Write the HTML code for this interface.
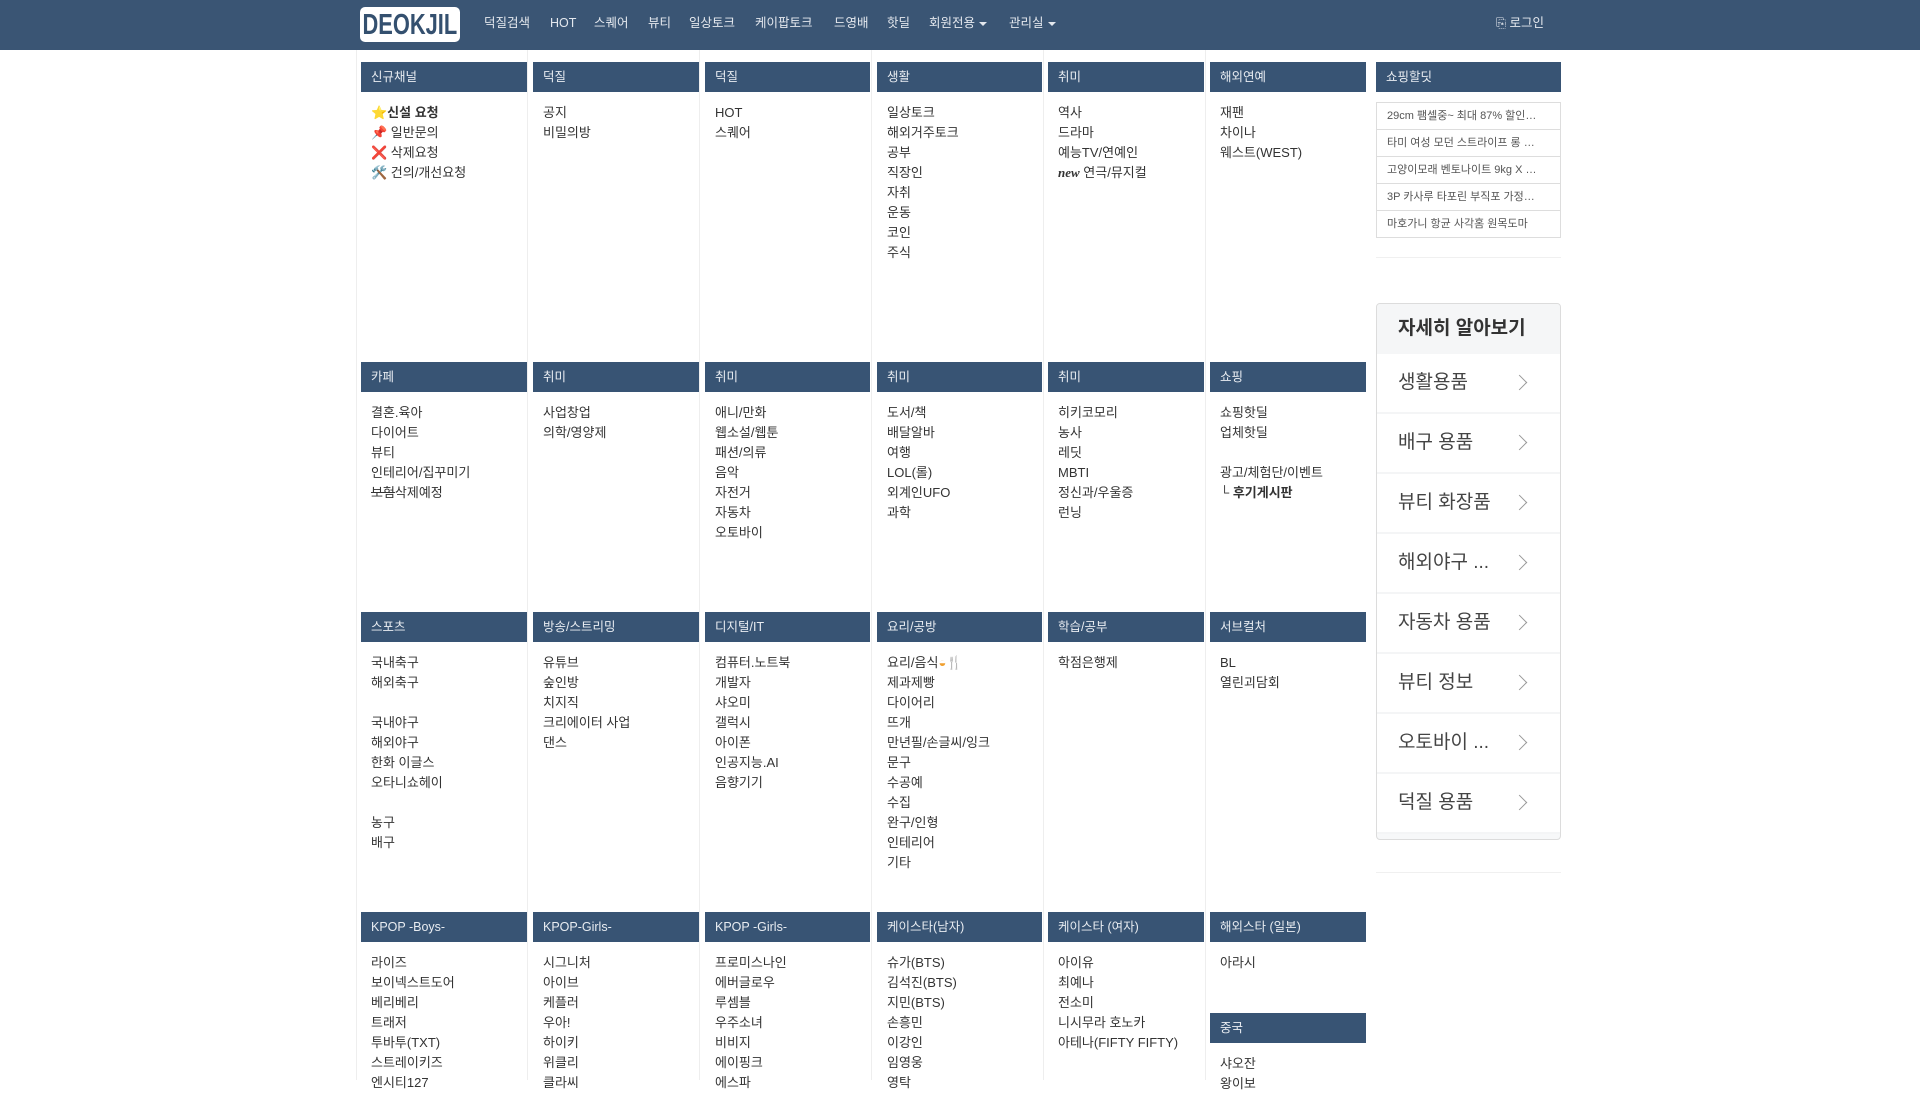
<!DOCTYPE html>
<html><head><meta charset="utf-8">
<style>
*{margin:0;padding:0;box-sizing:border-box}
body{width:1920px;height:1080px;overflow:hidden;background:#fff;font-family:"Liberation Sans","Noto Sans CJK KR",sans-serif;font-size:13px;color:#333;position:relative}
.nav{position:absolute;left:0;top:0;width:1920px;height:50px;background:#3a5574}
.nav span{position:absolute;top:13px;line-height:20px;height:20px;color:#e4e8ee;font-size:12.5px;white-space:nowrap}
.logo{position:absolute;left:360px;top:7px;width:100px;height:35px;background:#fff;border-radius:5px;color:#34506f;font-weight:900;font-size:23px;text-align:center;line-height:35px;letter-spacing:0px;font-family:"Liberation Sans",sans-serif}
.logo b{display:inline-block;transform:scale(0.95,1.25)}
.car{display:inline-block;border-left:4px solid transparent;border-right:4px solid transparent;border-top:4px solid #e4e8ee;vertical-align:middle;margin-left:4px}
.vl{position:absolute;top:50px;width:1px;height:1030px;background:#eeeeee}
.blk{position:absolute}
.h{height:30px;background:#385474;color:#e8ecf1;line-height:30px;padding-left:10px;font-size:12.5px;white-space:nowrap}
.it{padding:11px 0 0 10px;line-height:20px;white-space:nowrap}
.it div{height:20px}
.sh{position:absolute;left:1376px;width:185px}
.sl{height:27px;border:1px solid #ddd;border-top:none;font-size:11px;color:#555;line-height:26px;padding-left:10px;white-space:nowrap;overflow:hidden}
.box{position:absolute;left:1376px;top:303px;width:185px;height:537px;border:1px solid #dcdcdc;border-radius:4px;overflow:hidden;background:#f7f8f9}
.box .t{height:50px;background:#f5f6f7;font-size:19px;font-weight:bold;color:#333;line-height:50px;padding-left:21px}
.box .r{height:60px;background:#fff;border-bottom:2px solid #f4f5f6;font-size:19px;color:#444;line-height:58px;padding-left:21px;position:relative}
.box .r:after{content:"";position:absolute;left:137px;top:23px;width:10px;height:10px;border-right:1.5px solid #999;border-top:1.5px solid #999;transform:rotate(45deg)}
</style></head><body>
<div class="nav">
<div class="logo"><b>DEOKJIL</b></div>
<span style="left:484px">덕질검색</span>
<span style="left:550px">HOT</span>
<span style="left:594px">스퀘어</span>
<span style="left:648px">뷰티</span>
<span style="left:689px">일상토크</span>
<span style="left:755px">케이팝토크</span>
<span style="left:834px">드영배</span>
<span style="left:887px">핫딜</span>
<span style="left:929px">회원전용<i class="car"></i></span>
<span style="left:1009px">관리실<i class="car"></i></span>
<span style="left:1496px">&#x2398;&nbsp;로그인</span>
</div>

<div class="vl" style="left:356px"></div>
<div class="vl" style="left:527px"></div>
<div class="vl" style="left:699px"></div>
<div class="vl" style="left:871px"></div>
<div class="vl" style="left:1043px"></div>
<div class="vl" style="left:1205px"></div>

<div class="blk" style="left:361px;top:62px;width:166px"><div class="h">신규채널</div><div class="it"><div><b>⭐신설 요청</b></div><div>📌 일반문의</div><div><span style="color:#e33">❌</span> 삭제요청</div><div>🛠️ 건의/개선요청</div></div></div>
<div class="blk" style="left:533px;top:62px;width:166px"><div class="h">덕질</div><div class="it"><div>공지</div><div>비밀의방</div></div></div>
<div class="blk" style="left:705px;top:62px;width:165px"><div class="h">덕질</div><div class="it"><div>HOT</div><div>스퀘어</div></div></div>
<div class="blk" style="left:877px;top:62px;width:165px"><div class="h">생활</div><div class="it"><div>일상토크</div><div>해외거주토크</div><div>공부</div><div>직장인</div><div>자취</div><div>운동</div><div>코인</div><div>주식</div></div></div>
<div class="blk" style="left:1048px;top:62px;width:156px"><div class="h">취미</div><div class="it"><div>역사</div><div>드라마</div><div>예능TV/연예인</div><div><b><i style="font-family:'Liberation Serif',serif">new</i></b> 연극/뮤지컬</div></div></div>
<div class="blk" style="left:1210px;top:62px;width:156px"><div class="h">해외연예</div><div class="it"><div>재팬</div><div>차이나</div><div>웨스트(WEST)</div></div></div>

<div class="blk" style="left:361px;top:362px;width:166px"><div class="h">카페</div><div class="it"><div>결혼.육아</div><div>다이어트</div><div>뷰티</div><div>인테리어/집꾸미기</div><div><s>보험</s>삭제예정</div></div></div>
<div class="blk" style="left:533px;top:362px;width:166px"><div class="h">취미</div><div class="it"><div>사업창업</div><div>의학/영양제</div></div></div>
<div class="blk" style="left:705px;top:362px;width:165px"><div class="h">취미</div><div class="it"><div>애니/만화</div><div>웹소설/웹툰</div><div>패션/의류</div><div>음악</div><div>자전거</div><div>자동차</div><div>오토바이</div></div></div>
<div class="blk" style="left:877px;top:362px;width:165px"><div class="h">취미</div><div class="it"><div>도서/책</div><div>배달알바</div><div>여행</div><div>LOL(롤)</div><div>외계인UFO</div><div>과학</div></div></div>
<div class="blk" style="left:1048px;top:362px;width:156px"><div class="h">취미</div><div class="it"><div>히키코모리</div><div>농사</div><div>레딧</div><div>MBTI</div><div>정신과/우울증</div><div>런닝</div></div></div>
<div class="blk" style="left:1210px;top:362px;width:156px"><div class="h">쇼핑</div><div class="it"><div>쇼핑핫딜</div><div>업체핫딜</div><div></div><div>광고/체험단/이벤트</div><div><b>└ 후기게시판</b></div></div></div>

<div class="blk" style="left:361px;top:612px;width:166px"><div class="h">스포츠</div><div class="it"><div>국내축구</div><div>해외축구</div><div></div><div>국내야구</div><div>해외야구</div><div>한화 이글스</div><div>오타니쇼헤이</div><div></div><div>농구</div><div>배구</div></div></div>
<div class="blk" style="left:533px;top:612px;width:166px"><div class="h">방송/스트리밍</div><div class="it"><div>유튜브</div><div>숲인방</div><div>치지직</div><div>크리에이터 사업</div><div>댄스</div></div></div>
<div class="blk" style="left:705px;top:612px;width:165px"><div class="h">디지털/IT</div><div class="it"><div>컴퓨터.노트북</div><div>개발자</div><div>샤오미</div><div>갤럭시</div><div>아이폰</div><div>인공지능.AI</div><div>음향기기</div></div></div>
<div class="blk" style="left:877px;top:612px;width:165px"><div class="h">요리/공방</div><div class="it"><div>요리/음식<span style="color:#f0a030">◒</span><span style="color:#bbb">🍴</span></div><div>제과제빵</div><div>다이어리</div><div>뜨개</div><div>만년필/손글씨/잉크</div><div>문구</div><div>수공예</div><div>수집</div><div>완구/인형</div><div>인테리어</div><div>기타</div></div></div>
<div class="blk" style="left:1048px;top:612px;width:156px"><div class="h">학습/공부</div><div class="it"><div>학점은행제</div></div></div>
<div class="blk" style="left:1210px;top:612px;width:156px"><div class="h">서브컬처</div><div class="it"><div>BL</div><div>열린괴담회</div></div></div>

<div class="blk" style="left:361px;top:912px;width:166px"><div class="h">KPOP -Boys-</div><div class="it"><div>라이즈</div><div>보이넥스트도어</div><div>베리베리</div><div>트래저</div><div>투바투(TXT)</div><div>스트레이키즈</div><div>엔시티127</div></div></div>
<div class="blk" style="left:533px;top:912px;width:166px"><div class="h">KPOP-Girls-</div><div class="it"><div>시그니처</div><div>아이브</div><div>케플러</div><div>우아!</div><div>하이키</div><div>위클리</div><div>클라씨</div></div></div>
<div class="blk" style="left:705px;top:912px;width:165px"><div class="h">KPOP -Girls-</div><div class="it"><div>프로미스나인</div><div>에버글로우</div><div>루셈블</div><div>우주소녀</div><div>비비지</div><div>에이핑크</div><div>에스파</div></div></div>
<div class="blk" style="left:877px;top:912px;width:165px"><div class="h">케이스타(남자)</div><div class="it"><div>슈가(BTS)</div><div>김석진(BTS)</div><div>지민(BTS)</div><div>손흥민</div><div>이강인</div><div>임영웅</div><div>영탁</div></div></div>
<div class="blk" style="left:1048px;top:912px;width:156px"><div class="h">케이스타 (여자)</div><div class="it"><div>아이유</div><div>최예나</div><div>전소미</div><div>니시무라 호노카</div><div>아테나(FIFTY FIFTY)</div></div></div>
<div class="blk" style="left:1210px;top:912px;width:156px"><div class="h">해외스타 (일본)</div><div class="it"><div>아라시</div></div></div>
<div class="blk" style="left:1210px;top:1013px;width:156px"><div class="h">중국</div><div class="it"><div>샤오잔</div><div>왕이보</div></div></div>

<div class="sh" style="top:62px"><div class="h">쇼핑할딧</div></div>
<div class="sh" style="top:102px;border-top:1px solid #ddd">
<div class="sl">29cm 팸셀중~ 최대 87% 할인…</div>
<div class="sl">타미 여성 모던 스트라이프 롱 …</div>
<div class="sl">고양이모래 벤토나이트 9kg X …</div>
<div class="sl">3P 카사루 타포린 부직포 가정…</div>
<div class="sl">마호가니 항균 사각홈 원목도마</div>
</div>
<div style="position:absolute;left:1376px;top:257px;width:185px;height:1px;background:#f0f0f0"></div>
<div class="box">
<div class="t">자세히 알아보기</div>
<div class="r">생활용품</div>
<div class="r">배구 용품</div>
<div class="r">뷰티 화장품</div>
<div class="r">해외야구 ...</div>
<div class="r">자동차 용품</div>
<div class="r">뷰티 정보</div>
<div class="r">오토바이 ...</div>
<div class="r">덕질 용품</div>
</div>
<div style="position:absolute;left:1376px;top:872px;width:185px;height:1px;background:#f0f0f0"></div>
</body></html>
